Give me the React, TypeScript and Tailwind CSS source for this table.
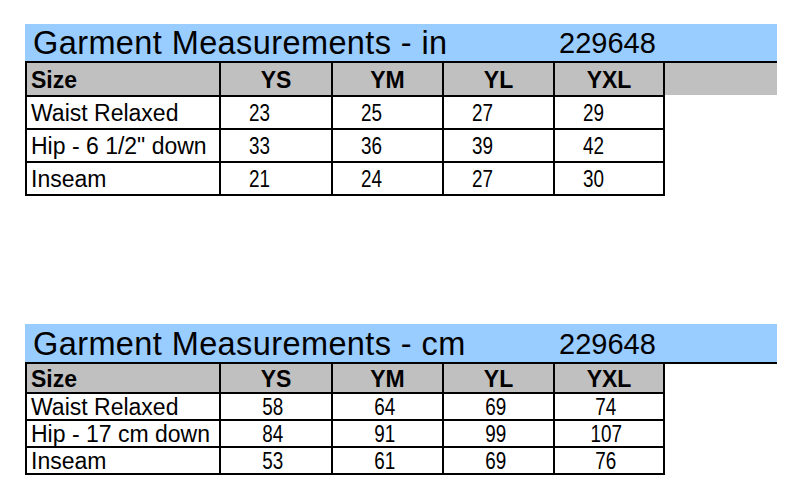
import React from "react";

type Table = {
  unit: string;
  rows: [string, string[]][];
  headerH: string;
  rowH: string;
  barH: string;
  numAlign: "left" | "center";
  grayExt: boolean;
};

const sizes = ["YS", "YM", "YL", "YXL"];

function MeasureTable({ t }: { t: Table }) {
  const rowCls = t.rowH;
  return (
    <div className="ml-[25px] w-[752px]">
      <div className={`${t.barH} bg-[#99ccff] flex items-center text-black`}>
        <span className="pl-[8px] w-[534px] text-[32.5px] leading-none tracking-[0.4px] pt-[2px]">
          Garment Measurements - {t.unit}
        </span>
        <span className="text-[29px] leading-none pt-[2px]">229648</span>
      </div>
      <div className="flex border-t-2 border-black items-start">
        <div className="w-[640px] shrink-0 grid grid-cols-[194px_112px_111px_111px_110px] border-l-2 border-black text-[23px] text-black">
          <div className={`${t.headerH} bg-[#c0c0c0] border-r-2 border-b-2 border-black flex items-center pl-[4px] pt-[2px] font-bold`}>
            Size
          </div>
          {sizes.map((s) => (
            <div
              key={s}
              className={`${t.headerH} bg-[#c0c0c0] border-r-2 border-b-2 border-black flex items-center justify-center pt-[2px] font-bold`}
            >
              {s}
            </div>
          ))}
          {t.rows.map(([label, vals]) => (
            <React.Fragment key={label}>
              <div className={`${rowCls} border-r-2 border-b-2 border-black flex items-center pl-[4px] pt-[2px] whitespace-nowrap`}>
                {label}
              </div>
              {vals.map((v, i) => (
                <div
                  key={i}
                  className={`${rowCls} border-r-2 border-b-2 border-black flex items-center pt-[2px] ${
                    t.numAlign === "left" ? "pl-[28px]" : "justify-center pr-[6px]"
                  }`}
                >
                  <span
                    className={`inline-block scale-x-[0.82] ${
                      t.numAlign === "left" ? "origin-left" : "origin-center"
                    }`}
                  >
                    {v}
                  </span>
                </div>
              ))}
            </React.Fragment>
          ))}
        </div>
        {t.grayExt && <div className="flex-1 h-[32px] bg-[#c0c0c0]" />}
      </div>
    </div>
  );
}

const inches: Table = {
  unit: "in",
  rows: [
    ["Waist Relaxed", ["23", "25", "27", "29"]],
    ['Hip - 6 1/2" down', ["33", "36", "39", "42"]],
    ["Inseam", ["21", "24", "27", "30"]],
  ],
  headerH: "h-[34px]",
  rowH: "h-[33px]",
  barH: "h-[37px]",
  numAlign: "left",
  grayExt: true,
};

const cms: Table = {
  unit: "cm",
  rows: [
    ["Waist Relaxed", ["58", "64", "69", "74"]],
    ["Hip - 17 cm down", ["84", "91", "99", "107"]],
    ["Inseam", ["53", "61", "69", "76"]],
  ],
  headerH: "h-[30px]",
  rowH: "h-[27px]",
  barH: "h-[38px]",
  numAlign: "center",
  grayExt: false,
};

export default function App() {
  return (
    <div className="w-[801px] h-[500px] bg-white font-['Liberation_Sans',Arial,sans-serif] pt-[24px]">
      <MeasureTable t={inches} />
      <div className="h-[128px]" />
      <MeasureTable t={cms} />
    </div>
  );
}
